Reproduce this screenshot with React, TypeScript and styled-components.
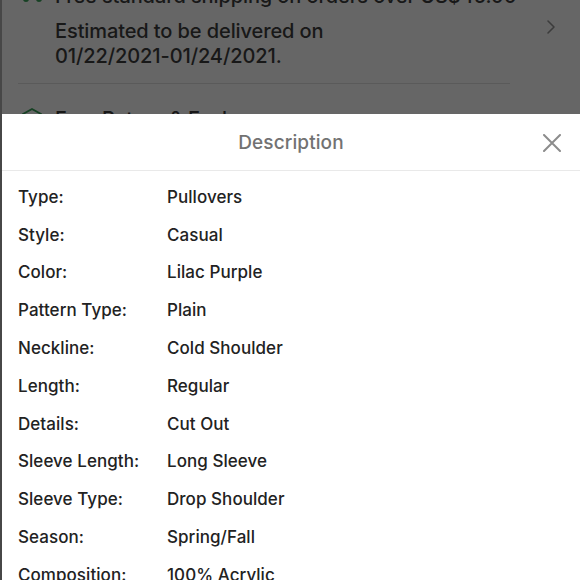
import styled, { createGlobalStyle } from 'styled-components';
import { ChevronRight } from 'lucide-react';

const GlobalStyle = createGlobalStyle`
  html, body {
    margin: 0;
    padding: 0;
    width: 580px;
    height: 580px;
    overflow: hidden;
    background: #fff;
  }
  * { box-sizing: border-box; }
`;

const Screen = styled.div`
  position: relative;
  width: 580px;
  height: 580px;
  overflow: hidden;
  border-left: 2px solid #474747;
  background: #fff;
  font-family: Inter, "Noto Sans", "Liberation Sans", sans-serif;
`;

const Page = styled.div`
  margin-top: -16px;
  color: #3e3e3e;
`;

const InfoBlock = styled.div<{ $top?: number }>`
  display: flex;
  align-items: flex-start;
  padding-left: 16px;
  margin-top: ${(p) => p.$top ?? 0}px;
`;

const IconCell = styled.div<{ $top?: number }>`
  width: 37px;
  flex: none;
  padding: ${(p) => p.$top ?? 0}px 0 0 2px;
`;

const InfoText = styled.div`
  flex: 1;
  font-size: 20px;
  font-weight: 500;
  line-height: 25px;
  letter-spacing: -0.1px;
`;

const Line = styled.div<{ $gap?: number }>`
  margin-top: ${(p) => p.$gap ?? 0}px;
`;

const Arrow = styled.div<{ $top: number }>`
  width: 40px;
  margin-right: 9px;
  display: flex;
  justify-content: center;
  padding-top: ${(p) => p.$top}px;
  color: #979797;
`;

const Divider = styled.div`
  height: 1px;
  background: #e2e2e2;
  margin: 14px 70px 0 16px;
`;

const Dim = styled.div`
  position: absolute;
  inset: 0;
  background: rgba(0, 0, 0, 0.6);
`;

const Sheet = styled.div`
  position: absolute;
  left: 0;
  right: 0;
  top: 114px;
  bottom: 0;
  background: #fff;
  display: flex;
  flex-direction: column;
`;

const SheetHeader = styled.div`
  position: relative;
  height: 57px;
  flex: none;
  display: flex;
  align-items: center;
  justify-content: center;
  border-bottom: 1px solid #e9e9e9;
`;

const Title = styled.div`
  font-size: 19px;
  font-weight: 500;
  color: #727272;
  letter-spacing: 0.1px;
`;

const CloseButton = styled.button`
  position: absolute;
  right: 18px;
  top: 19px;
  width: 20px;
  height: 20px;
  padding: 0;
  border: none;
  background: none;
  display: flex;
  align-items: center;
  justify-content: center;
`;

const List = styled.div`
  padding: 7px 16px 0 16px;
`;

const Row = styled.div`
  display: flex;
  height: 37.8px;
  align-items: center;
  font-size: 17px;
  font-weight: 500;
  color: #222;
  letter-spacing: 0.05px;
`;

const Key = styled.div`
  width: 149px;
  flex: none;
`;

const Value = styled.div`
  flex: 1;
`;

const Truck = () => (
  <svg width="26" height="20" viewBox="0 0 26 20" fill="none" stroke="#3aa35a" strokeWidth="2" strokeLinecap="round">
    <path d="M2 3h14v11H2z M16 7h5l3 4v3h-8" />
    <circle cx="6" cy="15" r="2" fill="#3aa35a" />
    <circle cx="19" cy="15" r="2" fill="#3aa35a" />
  </svg>
);

const Shield = () => (
  <svg width="24" height="26" viewBox="0 0 24 26" fill="none" stroke="#3aa35a" strokeWidth="2" strokeLinejoin="round">
    <path d="M12 2l9 5v12l-9 5-9-5V7z" />
  </svg>
);

const details: [string, string][] = [
  ['Type:', 'Pullovers'],
  ['Style:', 'Casual'],
  ['Color:', 'Lilac Purple'],
  ['Pattern Type:', 'Plain'],
  ['Neckline:', 'Cold Shoulder'],
  ['Length:', 'Regular'],
  ['Details:', 'Cut Out'],
  ['Sleeve Length:', 'Long Sleeve'],
  ['Sleeve Type:', 'Drop Shoulder'],
  ['Season:', 'Spring/Fall'],
  ['Composition:', '100% Acrylic'],
];

export default function App() {
  return (
    <>
      <GlobalStyle />
      <Screen>
        <Page>
          <InfoBlock>
            <IconCell $top={0}>
              <Truck />
            </IconCell>
            <InfoText>
              <Line>Free standard shipping on orders over US$45.00</Line>
              <Line $gap={10}>Estimated to be delivered on</Line>
              <Line>01/22/2021-01/24/2021.</Line>
            </InfoText>
            <Arrow $top={31}>
              <ChevronRight size={24} strokeWidth={1.6} />
            </Arrow>
          </InfoBlock>
          <Divider />
          <InfoBlock $top={23}>
            <IconCell $top={0}>
              <Shield />
            </IconCell>
            <InfoText>
              <Line>Free Return &amp; Exchange</Line>
            </InfoText>
            <Arrow $top={2}>
              <ChevronRight size={24} strokeWidth={1.6} />
            </Arrow>
          </InfoBlock>
        </Page>
        <Dim />
        <Sheet>
          <SheetHeader>
            <Title>Description</Title>
            <CloseButton aria-label="Close">
              <svg width="18" height="18" viewBox="0 0 18 18" stroke="#8c8c8c" strokeWidth="2" strokeLinecap="round">
                <path d="M1 1l16 16M17 1L1 17" />
              </svg>
            </CloseButton>
          </SheetHeader>
          <List>
            {details.map(([k, v]) => (
              <Row key={k}>
                <Key>{k}</Key>
                <Value>{v}</Value>
              </Row>
            ))}
          </List>
        </Sheet>
      </Screen>
    </>
  );
}
